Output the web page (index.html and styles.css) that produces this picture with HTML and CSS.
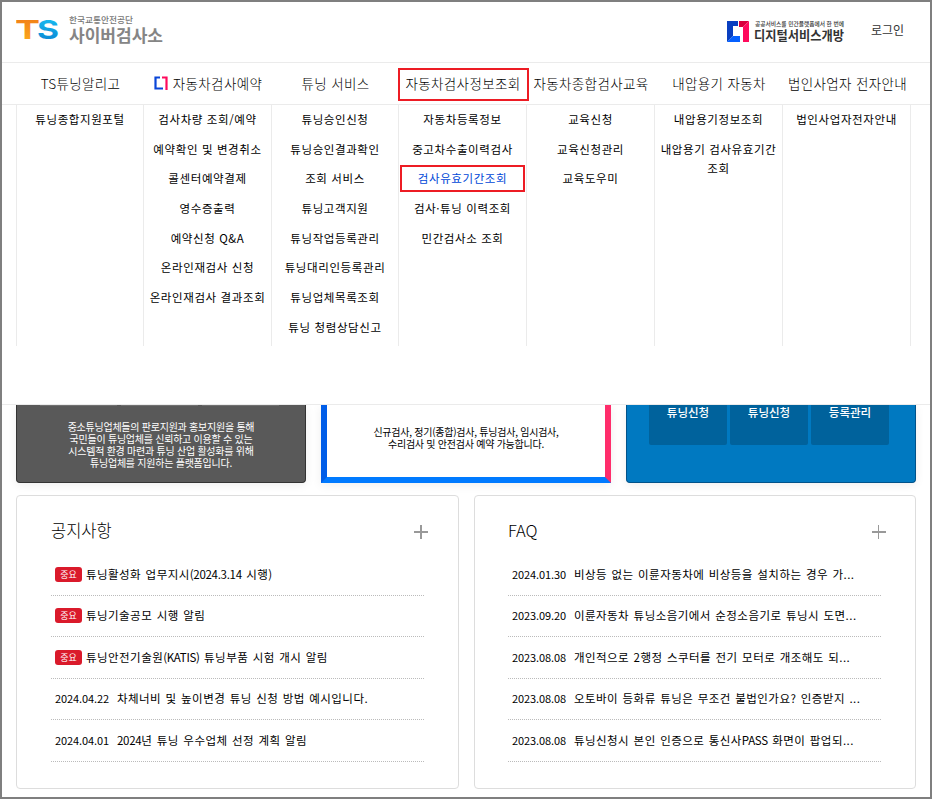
FILE: index.html
```html
<!DOCTYPE html>
<html lang="ko">

<head>
  <meta charset="UTF-8">
  <meta name="viewport" content="width=device-width, initial-scale=1.0">
  <title>TS 사이버검사소</title>
  <link rel="stylesheet" href="styles.css">
</head>

<body>
  <header class="header">
    <!-- Logo -->
    <svg class="logo" width="150" height="42" viewBox="0 0 150 42">
      <defs>
        <linearGradient id="orange" x1="0" y1="0" x2="0" y2="1">
          <stop offset="0" stop-color="#f07818"/>
          <stop offset="1" stop-color="#fdb01c"/>
        </linearGradient>
        <linearGradient id="blue" x1="0" y1="0" x2="0" y2="1">
          <stop offset="0" stop-color="#18c4f4"/>
          <stop offset="1" stop-color="#0a80d0"/>
        </linearGradient>
      </defs>
      <text class="logo-mark" x="-1" y="27" textLength="25" lengthAdjust="spacingAndGlyphs" fill="url(#orange)">T</text>
      <text class="logo-mark" x="21" y="27" textLength="22" lengthAdjust="spacingAndGlyphs" fill="url(#blue)">S</text>
      <text class="logo-small" x="53" y="10.5" textLength="64" lengthAdjust="spacingAndGlyphs">한국교통안전공단</text>
      <text class="logo-name" x="53" y="30" textLength="94" lengthAdjust="spacingAndGlyphs">사이버검사소</text>
    </svg>
    <div class="util">
      <svg class="open-logo" width="120" height="32" viewBox="0 0 120 32">
        <path fill="#0a3fc0" d="M0 1h11v5H6v10l-6 6z"/>
        <path fill="#0560ff" d="M0 22l6-6h7v6z"/>
        <path fill="#d8003c" d="M12 1h10l-6 6h-4z"/>
        <path fill="#ff0a5c" d="M22 1v21h-6V7z"/>
        <text class="open-small" x="28" y="6" textLength="89" lengthAdjust="spacingAndGlyphs">공공서비스를 민간플랫폼에서 한 번에</text>
        <text class="open-name" x="27" y="20" textLength="90" lengthAdjust="spacingAndGlyphs">디지털서비스개방</text>
      </svg>
      <a class="login">로그인</a>
    </div>
  </header>

  <nav class="nav">
    <a class="nav-item">TS튜닝알리고</a>
    <a class="nav-item">
      <svg class="nav-icon" width="14" height="14" viewBox="0 0 14 14" fill="none" stroke-width="2.2">
        <path stroke="#0a46d8" d="M6 1.5H1.5v11H9"/>
        <path stroke="#ff0a5c" d="M8 1.5h4.5V14"/>
      </svg>
      자동차검사예약
    </a>
    <a class="nav-item">튜닝 서비스</a>
    <a class="nav-item marked">자동차검사정보조회</a>
    <a class="nav-item">자동차종합검사교육</a>
    <a class="nav-item">내압용기 자동차</a>
    <a class="nav-item">법인사업자 전자안내</a>
  </nav>

  <!-- Opened sub menu -->
  <div class="submenu">
    <ul>
      <li>튜닝종합지원포털</li>
    </ul>
    <ul>
      <li>검사차량 조회/예약</li>
      <li>예약확인 및 변경취소</li>
      <li>콜센터예약결제</li>
      <li>영수증출력</li>
      <li>예약신청 Q&amp;A</li>
      <li>온라인재검사 신청</li>
      <li>온라인재검사 결과조회</li>
    </ul>
    <ul>
      <li>튜닝승인신청</li>
      <li>튜닝승인결과확인</li>
      <li>조회 서비스</li>
      <li>튜닝고객지원</li>
      <li>튜닝작업등록관리</li>
      <li>튜닝대리인등록관리</li>
      <li>튜닝업체목록조회</li>
      <li>튜닝 청렴상담신고</li>
    </ul>
    <ul>
      <li>자동차등록정보</li>
      <li>중고차수출이력검사</li>
      <li class="active">검사유효기간조회</li>
      <li>검사·튜닝 이력조회</li>
      <li>민간검사소 조회</li>
    </ul>
    <ul>
      <li>교육신청</li>
      <li>교육신청관리</li>
      <li>교육도우미</li>
    </ul>
    <ul>
      <li>내압용기정보조회</li>
      <li>내압용기 검사유효기간<br>조회</li>
    </ul>
    <ul>
      <li>법인사업자전자안내</li>
    </ul>
  </div>

  <!-- Cards, upper part hidden behind the menu -->
  <div class="cards">
    <div class="card card-dark">
      <div class="tabs"><span></span><span></span><span></span></div>
      <p>중소튜닝업체들의 판로지원과 홍보지원을 통해<br>국민들이 튜닝업체를 신뢰하고 이용할 수 있는<br>시스템적 환경 마련과 튜닝 산업 활성화를 위해<br>튜닝업체를 지원하는 플랫폼입니다.</p>
    </div>
    <div class="card card-white">
      <p>신규검사, 정기(종합)검사, 튜닝검사, 임시검사,<br>수리검사 및 안전검사 예약 가능합니다.</p>
    </div>
    <div class="card card-blue">
      <div class="buttons"><a>튜닝신청</a><a>튜닝신청</a><a>등록관리</a></div>
    </div>
  </div>

  <div class="boards">
    <section class="board">
      <div class="board-head">
        <h2>공지사항</h2>
        <svg width="14" height="14" viewBox="0 0 14 14" stroke="#999" stroke-width="2"><path d="M0 7h14M7 0v14"/></svg>
      </div>
      <ul>
        <li><span class="badge">중요</span><span>튜닝활성화 업무지시<span class="latin">(2024.3.14</span> 시행)</span></li>
        <li><span class="badge">중요</span>튜닝기술공모 시행 알림</li>
        <li><span class="badge">중요</span><span>튜닝안전기술원<span class="latin">(KATIS)</span> 튜닝부품 시험 개시 알림</span></li>
        <li><span class="date">2024.04.22</span>차체너비 및 높이변경 튜닝 신청 방법 예시입니다.</li>
        <li><span class="date">2024.04.01</span><span><span class="latin">2024</span>년 튜닝 우수업체 선정 계획 알림</span></li>
      </ul>
    </section>
    <section class="board faq">
      <div class="board-head">
        <h2>FAQ</h2>
        <svg width="14" height="14" viewBox="0 0 14 14" stroke="#999"><path stroke-width="2" d="M0 7h14"/><path d="M6.5 0v14"/></svg>
      </div>
      <ul>
        <li><span class="date">2024.01.30</span>비상등 없는 이륜자동차에 비상등을 설치하는 경우 가...</li>
        <li><span class="date">2023.09.20</span>이륜자동차 튜닝소음기에서 순정소음기로 튜닝시 도면...</li>
        <li><span class="date">2023.08.08</span>개인적으로 2행정 스쿠터를 전기 모터로 개조해도 되...</li>
        <li><span class="date">2023.08.08</span>오토바이 등화류 튜닝은 무조건 불법인가요? 인증받지 ...</li>
        <li><span class="date">2023.08.08</span><span>튜닝신청시 본인 인증으로 통신사<span class="latin">PASS</span> 화면이 팝업되...</span></li>
      </ul>
    </section>
  </div>
</body>

</html>
```
FILE: styles.css
```css
* {
  box-sizing: border-box;
}

body {
  margin: 0;
  height: 799px;
  overflow: hidden;
  border: 2px solid #7f7f7f;
  background-color: #fff;
  color: #000;
  font-family: "Noto Sans CJK KR", sans-serif;
  font-size: 11.5px;
}

ul,
p,
h2 {
  margin: 0;
  padding: 0;
  list-style: none;
}

.header {
  display: flex;
  justify-content: space-between;
  height: 61px;
  padding: 10px 26px 0 14px;
  border-bottom: 1px solid #ebebeb;
}

.logo-mark {
  font-family: Inter, sans-serif;
  font-weight: 700;
  font-size: 26px;
}

.logo-small {
  font-size: 8.5px;
  font-weight: 500;
  fill: #777;
}

.logo-name {
  font-size: 17px;
  font-weight: 700;
  fill: #858585;
}

.util {
  display: flex;
  gap: 24px;
  padding-top: 8px;
}

.open-small {
  font-size: 5.5px;
  font-weight: 500;
  fill: #333;
}

.open-name {
  font-size: 13px;
  font-weight: 700;
  fill: #333;
}

.login {
  font-size: 12px;
  line-height: 19px;
  color: #333;
}

.nav,
.submenu {
  display: grid;
  grid-template-columns: 127px 128px 127px 128px 128px 128px 129px;
  padding-left: 14px;
}

.nav {
  height: 42px;
  border-bottom: 1px solid #ebebeb;
}

.nav-item {
  position: relative;
  display: flex;
  align-items: center;
  justify-content: center;
  gap: 5px;
  padding: 0 0 2px 2px;
  color: #000;
  font-size: 13.5px;
  font-weight: 300;
  letter-spacing: 0.35px;
  white-space: nowrap;
}

.marked::after,
.active::after {
  content: "";
  position: absolute;
  border: 2px solid #ed1c24;
}

.marked::after {
  inset: 5px -3px 3px 0;
}

.submenu {
  height: 300px;
  border-bottom: 1px solid #ebebeb;
}

.submenu ul {
  height: 241px;
  border-left: 1px solid #ebebeb;
  text-align: center;
}

.submenu ul:last-child {
  border-right: 1px solid #ebebeb;
}

.submenu li {
  position: relative;
  padding: 5px 0;
  line-height: 19.65px;
  letter-spacing: 0.6px;
  white-space: nowrap;
}

.submenu .active {
  color: #0048d8;
}

.active::after {
  inset: 1px 1px 2px 1px;
}

.cards {
  display: flex;
  gap: 15px;
  height: 90px;
  padding-left: 14px;
  overflow: hidden;
}

.card {
  width: 290px;
  height: 78px;
  border-radius: 0 0 4px 4px;
  box-shadow: 0 2px 10px rgba(0, 0, 0, 0.07);
  font-size: 10px;
  line-height: 12px;
  text-align: center;
}

.card p {
  letter-spacing: -0.25px;
  white-space: nowrap;
}

.card-dark {
  border: 1px solid #333;
  border-top: none;
  background-color: #595959;
  color: #fff;
}

.tabs {
  display: flex;
  gap: 4px;
  padding: 0 26px 0 23px;
  margin-bottom: 15px;
}

.tabs span {
  flex: 1;
  height: 1px;
  background-color: #707070;
}

.card-white {
  padding-top: 21px;
  border: 6px solid #007aff;
  border-top: none;
  border-left-color: #005de8;
  border-right-color: #ff2d6b;
  border-radius: 0;
  background-color: #fff;
}

.card-blue {
  border: 1px solid #00528a;
  border-top: none;
  background-color: #0079c1;
}

.buttons {
  display: flex;
  gap: 3px;
  padding-left: 22px;
}

.buttons a {
  width: 78px;
  height: 40px;
  border-radius: 0 0 2px 2px;
  background-color: #00629c;
  color: #fff;
  font-size: 11.5px;
  font-weight: 500;
  line-height: 14px;
}

.boards {
  display: flex;
  gap: 15px;
  padding: 0 14px;
}

.board {
  width: 443px;
  height: 294px;
  padding: 0 34px;
  border: 1px solid #ddd;
  border-radius: 4px;
  background-color: #fff;
}

.faq {
  width: 442px;
  padding-left: 33px;
}

.board-head {
  display: flex;
  align-items: center;
  justify-content: space-between;
  height: 58px;
  padding-top: 14px;
  margin-right: -4px;
}

.faq .board-head {
  margin-right: -5px;
}

.board-head h2 {
  padding-bottom: 4px;
  color: #000;
  font-size: 16.5px;
  font-weight: 300;
  line-height: 24px;
}

.board li {
  display: flex;
  align-items: center;
  height: 41.5px;
  padding: 0 0 1px 4px;
  border-bottom: 1px dotted #bbb;
  letter-spacing: 0.45px;
  word-spacing: 0.8px;
  white-space: nowrap;
}

.latin {
  letter-spacing: -0.3px;
}

.badge {
  width: 27px;
  height: 15px;
  margin: 1px 4px 0 0;
  border-radius: 3px;
  background-color: #da1a2b;
  color: #fff;
  font-size: 9px;
  line-height: 15px;
  letter-spacing: 0;
  text-align: center;
}

.date {
  width: 62px;
  font-size: 11px;
  letter-spacing: -0.1px;
}
```
